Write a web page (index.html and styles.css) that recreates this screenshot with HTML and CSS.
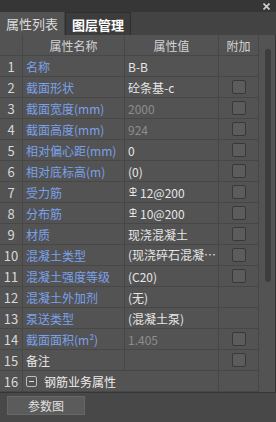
FILE: index.html
```html
<!DOCTYPE html>
<html>
<head>
<meta charset="utf-8">
<link rel="stylesheet" href="styles.css">
</head>
<body>
<div class="app">
  <div class="titlebar">
    <svg class="close" width="7" height="7" viewBox="0 0 7 7"><path d="M0.5 0.5L6.5 6.5M6.5 0.5L0.5 6.5" stroke="#d0d0d0" stroke-width="1.6"/></svg>
  </div>
  <div class="tabs">
    <div class="tab active">属性列表</div>
    <div class="tab inactive">图层管理</div>
  </div>
  <div class="panel">
    <div class="table">
      <div class="c num hd"></div><div class="c name hd center">属性名称</div><div class="c val hd center">属性值</div><div class="c add hd center">附加</div>

      <div class="c num">1</div><div class="c name blue">名称</div><div class="c val">B-B</div><div class="c add"></div>
      <div class="c num">2</div><div class="c name blue">截面形状</div><div class="c val">砼条基-c</div><div class="c add"><span class="cb"></span></div>
      <div class="c num">3</div><div class="c name blue">截面宽度(mm)</div><div class="c val gray">2000</div><div class="c add"><span class="cb"></span></div>
      <div class="c num">4</div><div class="c name blue">截面高度(mm)</div><div class="c val gray">924</div><div class="c add"><span class="cb"></span></div>
      <div class="c num">5</div><div class="c name blue">相对偏心距(mm)</div><div class="c val">0</div><div class="c add"><span class="cb"></span></div>
      <div class="c num">6</div><div class="c name blue">相对底标高(m)</div><div class="c val">(0)</div><div class="c add"><span class="cb"></span></div>
      <div class="c num">7</div><div class="c name blue">受力筋</div><div class="c val"><svg class="bar" width="8" height="9" viewBox="0 0 8 9"><rect x="1" y="1.5" width="6" height="4" rx="1" fill="none" stroke="#e6e6e6" stroke-width="1"/><path d="M4 0V8.5M0.5 8.5H7.5" stroke="#e6e6e6" stroke-width="1"/></svg>12@200</div><div class="c add"><span class="cb"></span></div>
      <div class="c num">8</div><div class="c name blue">分布筋</div><div class="c val"><svg class="bar" width="8" height="9" viewBox="0 0 8 9"><rect x="1" y="1.5" width="6" height="4" rx="1" fill="none" stroke="#e6e6e6" stroke-width="1"/><path d="M4 0V8.5M0.5 8.5H7.5" stroke="#e6e6e6" stroke-width="1"/></svg>10@200</div><div class="c add"><span class="cb"></span></div>
      <div class="c num">9</div><div class="c name blue">材质</div><div class="c val">现浇混凝土</div><div class="c add"><span class="cb"></span></div>
      <div class="c num">10</div><div class="c name blue">混凝土类型</div><div class="c val ell">(现浇碎石混凝土)</div><div class="c add"><span class="cb"></span></div>
      <div class="c num">11</div><div class="c name blue">混凝土强度等级</div><div class="c val">(C20)</div><div class="c add"><span class="cb"></span></div>
      <div class="c num">12</div><div class="c name blue">混凝土外加剂</div><div class="c val">(无)</div><div class="c add"></div>
      <div class="c num">13</div><div class="c name blue">泵送类型</div><div class="c val">(混凝土泵)</div><div class="c add"></div>
      <div class="c num">14</div><div class="c name blue">截面面积(m²)</div><div class="c val gray">1.405</div><div class="c add"><span class="cb"></span></div>
      <div class="c num">15</div><div class="c name">备注</div><div class="c val"></div><div class="c add"><span class="cb"></span></div>
      <div class="c num">16</div><div class="c group"><span class="minus"></span>钢筋业务属性</div><div class="c add"></div>
    </div>
    <div class="scroll"><div class="thumb"></div></div>
  </div>
  <div class="footer">
    <div class="btn">参数图</div>
  </div>
</div>
</body>
</html>
```
FILE: styles.css
```css
html, body {
  margin: 0;
  padding: 0;
  background: #4a4a4a;
}
.app {
  width: 276px;
  height: 422px;
  display: flex;
  flex-direction: column;
  font-family: "Noto Sans CJK SC", "Noto Sans", sans-serif;
  font-size: 12px;
  color: #e6e6e6;
  background: #4a4a4a;
  overflow: hidden;
}
.titlebar {
  height: 12px;
  background: #363636;
  display: flex;
  justify-content: flex-end;
  align-items: center;
  padding-right: 6px;
}
.close { display: block; }
.tabs {
  height: 23px;
  background: #434343;
  display: flex;
  align-items: stretch;
}
.tab {
  width: 64px;
  display: flex;
  align-items: center;
  justify-content: center;
  font-size: 13px;
  box-sizing: border-box;
}
.tab.active {
  background: #535353;
  color: #dcdcdc;
}
.tab.inactive {
  width: 66px;
  background: #3c3c3c;
  color: #ffffff;
  font-weight: bold;
  border: 1px solid #2e2e2e;
  border-bottom: none;
  margin-left: 1px;
}
.panel {
  display: flex;
  background: #535353;
  border-bottom: 1px solid #353535;
}
.table {
  width: 259px;
  display: grid;
  grid-template-columns: 23px 102px 94px 40px;
  grid-auto-rows: 21px;
}
.c {
  box-sizing: border-box;
  border-right: 1px solid #474747;
  border-bottom: 1px solid #474747;
  display: flex;
  align-items: center;
  white-space: nowrap;
  overflow: hidden;
  padding-left: 3px;
  min-width: 0;
}
.hd { color: #d4d4d4; }
.center { justify-content: center; padding-left: 0; }
.num {
  justify-content: center;
  padding-left: 0;
  font-size: 13px;
  color: #d8d8d8;
}
.blue { color: #7ba1ea; }
.gray { color: #8d8d8d; }
.ell { display: block; line-height: 20px; text-overflow: ellipsis; padding-right: 0; }
.add { justify-content: center; padding-left: 0; }
.cb {
  width: 14px;
  height: 14px;
  box-sizing: border-box;
  border: 1px solid #383838;
  border-radius: 2px;
  background: #5c5c5c;
}
.bar { margin: 5px 3px 0 1px; align-self: flex-start; }
.group {
  grid-column: span 2;
  color: #ececec;
}
.minus {
  width: 11px;
  height: 11px;
  box-sizing: border-box;
  border: 1px solid #bdbdbd;
  border-radius: 2px;
  margin-right: 7px;
  display: flex;
  align-items: center;
  justify-content: center;
}
.minus::after {
  content: "";
  width: 5px;
  height: 1px;
  background: #e0e0e0;
}
.scroll {
  width: 17px;
  box-sizing: border-box;
  border-right: 1px solid #353535;
  padding: 14px 0 0 6px;
}
.thumb {
  width: 6px;
  height: 233px;
  border-radius: 3px;
  background: #3d3d3d;
}
.footer {
  flex: 1;
  background: #484848;
  padding: 3px 0 0 7px;
}
.btn {
  width: 78px;
  height: 19px;
  box-sizing: border-box;
  background: #5b5b5b;
  border: 1px solid #666666;
  color: #e0e0e0;
  display: flex;
  align-items: center;
  justify-content: center;
}
```
